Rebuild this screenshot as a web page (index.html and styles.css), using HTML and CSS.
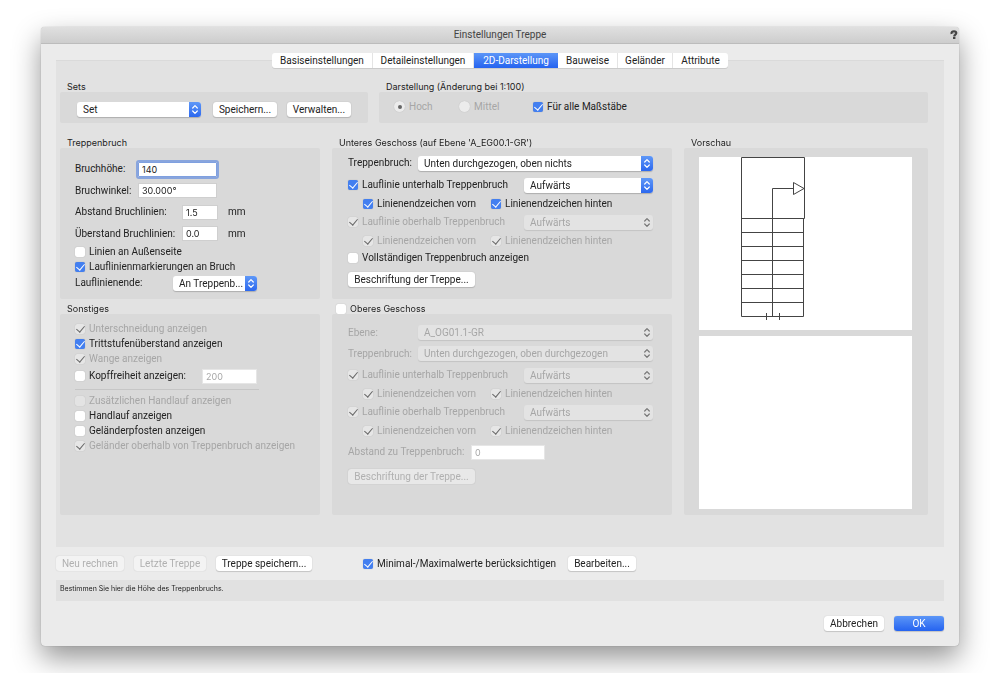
FILE: index.html
```html
<!DOCTYPE html>
<html lang="de">
<head>
<meta charset="utf-8">
<title>Einstellungen Treppe</title>
<link rel="stylesheet" href="styles.css">
</head>
<body>
<svg class="defs" aria-hidden="true">
  <symbol id="chevrons" viewBox="0 0 12 15"><path d="M3.7 6 6 3.6 8.3 6M3.7 9 6 11.4 8.3 9" fill="none" stroke="currentColor" stroke-width="1.2" stroke-linecap="round" stroke-linejoin="round"/></symbol>
</svg>
<main class="window">
  <header class="titlebar">
    <h1 class="title">Einstellungen Treppe</h1>
    <button class="help" type="button" aria-label="Hilfe"><svg width="8" height="10" viewBox="0 0 8 10"><path d="M1.6 4C1.200 1.900 2.500 1.400 4 1.400s2.600.7 2.200 2.100C5.900 4.700 4.400 4.700 4.200 6.400" fill="none" stroke="#444" stroke-width="2.200"/><circle cx="4" cy="3.400" r=".8" fill="#aaa"/><rect x="3" y="6.800" width="2.400" height="2.200" fill="#444"/></svg></button>
  </header>
  <div class="content">
    <nav class="tabs">
      <button type="button" class="tab tab-basis">Basiseinstellungen</button>
      <button type="button" class="tab tab-detail">Detaileinstellungen</button>
      <button type="button" class="tab tab-2d active">2D-Darstellung</button>
      <button type="button" class="tab tab-build">Bauweise</button>
      <button type="button" class="tab tab-rail">Geländer</button>
      <button type="button" class="tab tab-attr">Attribute</button>
    </nav>
    <div class="panel">
      <div class="top-groups">
        <section class="group">
          <h2 class="caption">Sets</h2>
          <div class="box sets-box">
            <span class="picker set-picker"><select aria-label="Set"><option>Set</option></select><svg class="arrows"><use href="#chevrons"/></svg></span>
            <button type="button" class="btn btn-64">Speichern...</button>
            <button type="button" class="btn btn-64">Verwalten...</button>
          </div>
        </section>
        <section class="group">
          <h2 class="caption">Darstellung (Änderung bei 1:100)</h2>
          <div class="box view-box">
            <label class="check off"><input type="radio" name="detail" checked disabled>Hoch</label>
            <label class="check off"><input type="radio" name="detail" disabled>Mittel</label>
            <label class="check"><input type="checkbox" checked>Für alle Maßstäbe</label>
          </div>
        </section>
      </div>
      <div class="columns">
        <div class="column">
          <section class="group">
            <h2 class="caption">Treppenbruch</h2>
            <div class="box break-box">
              <div class="row row-22 wide-field"><label for="height">Bruchhöhe:</label><input id="height" class="field focused" type="text" value="140" autofocus></div>
              <div class="row row-21 wide-field"><label for="angle">Bruchwinkel:</label><input id="angle" class="field" type="text" value="30.000°"></div>
              <div class="row row-22 unit-field"><label for="dist">Abstand Bruchlinien:</label><input id="dist" class="field" type="text" value="1.5"><span>mm</span></div>
              <div class="row row-21 unit-field"><label for="over">Überstand Bruchlinien:</label><input id="over" class="field" type="text" value="0.0"><span>mm</span></div>
              <label class="check row-15"><input type="checkbox">Linien an Außenseite</label>
              <label class="check row-15"><input type="checkbox" checked>Lauflinienmarkierungen an Bruch</label>
              <div class="row row-18 end-field"><label for="lineend">Lauflinienende:</label><span class="picker"><select id="lineend"><option>An Treppenb...</option></select><svg class="arrows"><use href="#chevrons"/></svg></span></div>
            </div>
          </section>
          <section class="group grow">
            <h2 class="caption">Sonstiges</h2>
            <div class="box misc-box">
              <label class="check row-15 off"><input type="checkbox" checked disabled>Unterschneidung anzeigen</label>
              <label class="check row-15"><input type="checkbox" checked>Trittstufenüberstand anzeigen</label>
              <label class="check row-15 off"><input type="checkbox" checked disabled>Wange anzeigen</label>
              <div class="row row-20 head-field"><label class="check"><input type="checkbox">Kopffreiheit anzeigen:</label><input class="field" type="text" value="200" aria-label="Kopffreiheit" disabled></div>
              <hr class="rule">
              <label class="check row-15 off"><input type="checkbox" disabled>Zusätzlichen Handlauf anzeigen</label>
              <label class="check row-15"><input type="checkbox">Handlauf anzeigen</label>
              <label class="check row-15"><input type="checkbox">Geländerpfosten anzeigen</label>
              <label class="check row-15 off"><input type="checkbox" checked disabled>Geländer oberhalb von Treppenbruch anzeigen</label>
            </div>
          </section>
        </div>
        <div class="column">
          <section class="group">
            <h2 class="caption">Unteres Geschoss (auf Ebene 'A_EG00.1-GR')</h2>
            <div class="box lower-box">
              <div class="row row-22 level-field"><label for="lbreak">Treppenbruch:</label><span class="picker"><select id="lbreak"><option>Unten durchgezogen, oben nichts</option></select><svg class="arrows"><use href="#chevrons"/></svg></span></div>
              <div class="row row-22 line-field"><label class="check"><input type="checkbox" checked>Lauflinie unterhalb Treppenbruch</label><span class="picker"><select aria-label="Richtung unterhalb"><option>Aufwärts</option></select><svg class="arrows"><use href="#chevrons"/></svg></span></div>
              <div class="row row-15 ends"><label class="check"><input type="checkbox" checked>Linienendzeichen vorn</label><label class="check"><input type="checkbox" checked>Linienendzeichen hinten</label></div>
              <div class="row row-22 line-field off"><label class="check"><input type="checkbox" checked disabled>Lauflinie oberhalb Treppenbruch</label><span class="picker"><select aria-label="Richtung oberhalb" disabled><option>Aufwärts</option></select><svg class="arrows"><use href="#chevrons"/></svg></span></div>
              <div class="row row-15 ends off"><label class="check"><input type="checkbox" checked disabled>Linienendzeichen vorn</label><label class="check"><input type="checkbox" checked disabled>Linienendzeichen hinten</label></div>
              <label class="check row-20"><input type="checkbox">Vollständigen Treppenbruch anzeigen</label>
              <div class="row row-22"><button type="button" class="btn btn-127">Beschriftung der Treppe...</button></div>
            </div>
          </section>
          <section class="group grow">
            <h2 class="caption caption-check"><label class="check"><input type="checkbox">Oberes Geschoss</label></h2>
            <div class="box upper-box off">
              <div class="row row-21 level-field"><label for="ulevel">Ebene:</label><span class="picker"><select id="ulevel" disabled><option>A_OG01.1-GR</option></select><svg class="arrows"><use href="#chevrons"/></svg></span></div>
              <div class="row row-21 level-field"><label for="ubreak">Treppenbruch:</label><span class="picker"><select id="ubreak" disabled><option>Unten durchgezogen, oben durchgezogen</option></select><svg class="arrows"><use href="#chevrons"/></svg></span></div>
              <div class="row row-22 line-field"><label class="check"><input type="checkbox" checked disabled>Lauflinie unterhalb Treppenbruch</label><span class="picker"><select aria-label="Richtung unterhalb, oberes Geschoss" disabled><option>Aufwärts</option></select><svg class="arrows"><use href="#chevrons"/></svg></span></div>
              <div class="row row-15 ends"><label class="check"><input type="checkbox" checked disabled>Linienendzeichen vorn</label><label class="check"><input type="checkbox" checked disabled>Linienendzeichen hinten</label></div>
              <div class="row row-22 line-field"><label class="check"><input type="checkbox" checked disabled>Lauflinie oberhalb Treppenbruch</label><span class="picker"><select aria-label="Richtung oberhalb, oberes Geschoss" disabled><option>Aufwärts</option></select><svg class="arrows"><use href="#chevrons"/></svg></span></div>
              <div class="row row-15 ends"><label class="check"><input type="checkbox" checked disabled>Linienendzeichen vorn</label><label class="check"><input type="checkbox" checked disabled>Linienendzeichen hinten</label></div>
              <div class="row row-28 gap-field"><label for="ugap">Abstand zu Treppenbruch:</label><input id="ugap" class="field" type="text" value="0" disabled></div>
              <div class="row row-20"><button type="button" class="btn btn-127" disabled>Beschriftung der Treppe...</button></div>
            </div>
          </section>
        </div>
        <section class="group">
          <h2 class="caption">Vorschau</h2>
          <div class="box preview-box">
            <div class="canvas">
              <svg width="213" height="173" viewBox="0 0 213 173" fill="none" stroke="#444" stroke-width="1">
                <path d="M42.500 159.500V.5H105.500V61.500M104.500 61.500V159.500M42.500 61.500H105.500M42.500 75.500H104.500M42.500 89.500H104.500M42.500 103.500H104.500M42.500 117.500H104.500M42.500 131.500H104.500M42.500 145.500H104.500M42.500 159.500H104.500"/>
                <path d="M73.500 159.500V31.500H94.500M94.500 25.500 105 31.500 94.500 37.500ZM67.500 156V163M80.500 156V163"/>
              </svg>
            </div>
            <div class="canvas"></div>
          </div>
        </section>
      </div>
    </div>
    <div class="actions">
      <button type="button" class="btn btn-68" disabled>Neu rechnen</button>
      <button type="button" class="btn btn-72" disabled>Letzte Treppe</button>
      <button type="button" class="btn btn-96">Treppe speichern...</button>
      <label class="check limits"><input type="checkbox" checked>Minimal-/Maximalwerte berücksichtigen</label>
      <button type="button" class="btn btn-68">Bearbeiten...</button>
    </div>
    <p class="status">Bestimmen Sie hier die Höhe des Treppenbruchs.</p>
    <footer class="footer">
      <button type="button" class="btn btn-60">Abbrechen</button>
      <button type="button" class="btn btn-50 primary">OK</button>
    </footer>
  </div>
</main>
</body>
</html>
```
FILE: styles.css
```css
* { box-sizing: border-box; }
body {
  margin: 0;
  padding: 27px 41px;
  background: #fff;
  color: #222;
  font: 10px/12px Roboto, "Liberation Sans", sans-serif;
}
button, input, select { margin: 0; font: inherit; color: inherit; }
.defs { position: absolute; width: 0; height: 0; }

.window {
  background: #ebebeb;
  border-radius: 4px;
  box-shadow: 0 0 1px rgba(0, 0, 0, .4), 0 12px 28px rgba(0, 0, 0, .42);
}
.titlebar {
  display: grid;
  grid-template-columns: 1fr auto 1fr;
  align-items: center;
  height: 17px;
  border-bottom: 1px solid #bcbcbc;
  border-radius: 4px 4px 0 0;
  background: linear-gradient(#e0e0e0, #cdcdcd);
}
.title { grid-column: 2; margin: 0; font-size: 10px; font-weight: 400; color: #444; }
.help { justify-self: end; display: flex; margin-right: 1px; padding: 0; border: 0; background: none; }
.content { padding: 9px 15px 15px; }

.tabs { position: relative; display: flex; justify-content: center; }
.tab {
  height: 15px;
  padding: 0;
  border: 0;
  border-right: 1px solid #e4e4e4;
  background: #fff;
  line-height: 15px;
  white-space: nowrap;
  box-shadow: 0 1px 0 rgba(0, 0, 0, .1);
}
.tab:first-child { border-radius: 3px 0 0 3px; }
.tab:last-child { border-right: 0; border-radius: 0 3px 3px 0; }
.tab.active { border: 0; background: linear-gradient(#5c96f7, #2563f0); color: #fff; }
.tab-basis, .tab-detail { width: 101px; }
.tab-2d { width: 84px; }
.tab-build { width: 60px; }
.tab-rail, .tab-attr { width: 55px; }

.panel {
  margin-top: -8px;
  padding: 20px 16px 32px 4px;
  border-top: 1px solid #dadada;
  background: #e2e2e2;
}
.top-groups { display: grid; grid-template-columns: 308fr 549fr; gap: 11px; margin-bottom: 14px; }
.columns { display: grid; grid-template-columns: minmax(0, 260fr) minmax(0, 340fr) minmax(0, 244fr); gap: 12px; }
.column { display: flex; flex-direction: column; gap: 4px; }
.group { display: flex; flex-direction: column; min-width: 0; }
.grow { flex: 1 0 auto; }
.caption { margin: 0; padding-left: 7px; height: 11px; font: 400 9px/11px Inter, "Liberation Sans", sans-serif; white-space: nowrap; }
.caption-check { padding-left: 4px; }
.box { flex: 1 0 auto; background: #d9d9d9; border-radius: 2px; }

.sets-box { display: flex; align-items: center; gap: 10px; height: 31px; padding: 4px 17px 0; }
.view-box { display: grid; grid-template-columns: 65px 74px auto; align-items: center; justify-content: start; height: 31px; padding: 0 15px 2px; }
.break-box { padding: 10px 15px 7px; }
.misc-box { padding: 7px 15px; }
.lower-box { padding: 4px 19px 9px 16px; }
.upper-box { padding: 8px 19px 29px 16px; }
.preview-box { display: flex; flex-direction: column; gap: 6px; padding: 9px 16px 6px 15px; }
.canvas { flex: 1; overflow: hidden; background: #fff; }
.canvas svg { display: block; }

.row { display: grid; align-items: center; justify-items: start; white-space: nowrap; }
.row-15 { height: 15px; }
.row-18 { height: 18px; }
.row-20 { height: 20px; }
.row-21 { height: 21px; }
.row-22 { height: 22px; }
.row-28 { height: 28px; }
.wide-field { grid-template-columns: 63px 79px; }
.unit-field { grid-template-columns: 107px 46px auto; }
.unit-field .field { width: 36px; }
.end-field { grid-template-columns: 98px 84px; }
.head-field { grid-template-columns: 127px 55px; }
.level-field { grid-template-columns: 70px 1fr; }
.line-field { grid-template-columns: 1fr 129px; }
.ends { grid-template-columns: 128px auto; justify-content: start; padding-left: 15px; }
.gap-field { grid-template-columns: 123px 74px; }

.check { display: flex; align-items: center; gap: 4px; white-space: nowrap; }
.off { color: #a6a6a6; }
.check input {
  appearance: none;
  display: grid;
  place-items: center;
  flex: none;
  width: 10px;
  height: 10px;
  border-radius: 2px;
  background: #fff;
  box-shadow: 0 0 1px rgba(0, 0, 0, .3);
}
.check input[type="checkbox"]:checked { background: #437ff0; color: #fff; }
.check input[type="checkbox"]:checked::before {
  content: "";
  width: 4px;
  height: 7px;
  margin-top: -2px;
  border: solid currentColor;
  border-width: 0 1px 1px 0;
  transform: rotate(40deg);
}
.check input:disabled { background: #e3e3e3; box-shadow: 0 0 1px rgba(0, 0, 0, .2); }
.check input[type="checkbox"]:checked:disabled { background: #e6e6e6; color: #666; }
.check input[type="radio"] { width: 11px; height: 11px; border-radius: 50%; background: #ececec; }
.check input[type="radio"]:checked::before { content: ""; width: 4px; height: 4px; border-radius: 50%; background: #666; }

.field {
  width: 100%;
  height: 15px;
  padding: 0 3px;
  border: 1px solid #cfcfcf;
  background: #fff;
  font: 9px Inter, "Liberation Sans", sans-serif;
}
.field:disabled { color: #a6a6a6; border-color: #e6e6e6; }
.field.focused { border-color: #7fa0e0; outline: 2px solid #89a5dd; border-radius: 1px; }

.picker { position: relative; display: block; width: 100%; height: 15px; }
.set-picker { width: 124px; margin-right: 2px; }
.picker select {
  appearance: none;
  display: block;
  width: 100%;
  height: 15px;
  padding: 0 12px 0 6px;
  border: 0;
  border-radius: 3px;
  background: #fff;
  line-height: 15px;
  box-shadow: 0 1px 1px rgba(0, 0, 0, .2);
  opacity: 1;
}
.arrows {
  position: absolute;
  top: 0;
  right: 0;
  width: 12px;
  height: 15px;
  border-radius: 0 3px 3px 0;
  background: linear-gradient(#5f98f7, #2c68ef);
  color: #fff;
  pointer-events: none;
}
.picker select:disabled { background: #e3e3e3; color: #a6a6a6; box-shadow: 0 1px 1px rgba(0, 0, 0, .1); }
.picker select:disabled + .arrows { background: none; color: #777; }

.btn {
  height: 15px;
  padding: 0;
  border: 0;
  border-radius: 3px;
  background: #fff;
  line-height: 15px;
  white-space: nowrap;
  box-shadow: 0 0 1px rgba(0, 0, 0, .25), 0 1px 1px rgba(0, 0, 0, .15);
}
.btn:disabled { background: rgba(255, 255, 255, .4); color: #b0b0b0; box-shadow: 0 0 1px rgba(0, 0, 0, .25); }
.btn-50 { width: 50px; }
.btn-60 { width: 60px; }
.btn-64 { width: 64px; }
.btn-68 { width: 68px; }
.btn-72 { width: 72px; }
.btn-96 { width: 96px; }
.btn-127 { width: 127px; }
.primary { background: linear-gradient(#5c96f7, #2563f0); color: #fff; }

.rule { width: 184px; height: 1px; margin: 3px 0; border: 0; background: #c6c6c6; }

.actions { display: flex; align-items: center; gap: 10px; margin-top: 9px; }
.limits { width: 190px; margin-left: 41px; margin-right: 5px; }
.status { height: 21px; margin: 9px 0 15px; padding: 3px 4px; background: #e1e1e1; font: 7px/12px Inter, "Liberation Sans", sans-serif; }
.footer { display: flex; justify-content: flex-end; gap: 10px; }
```
